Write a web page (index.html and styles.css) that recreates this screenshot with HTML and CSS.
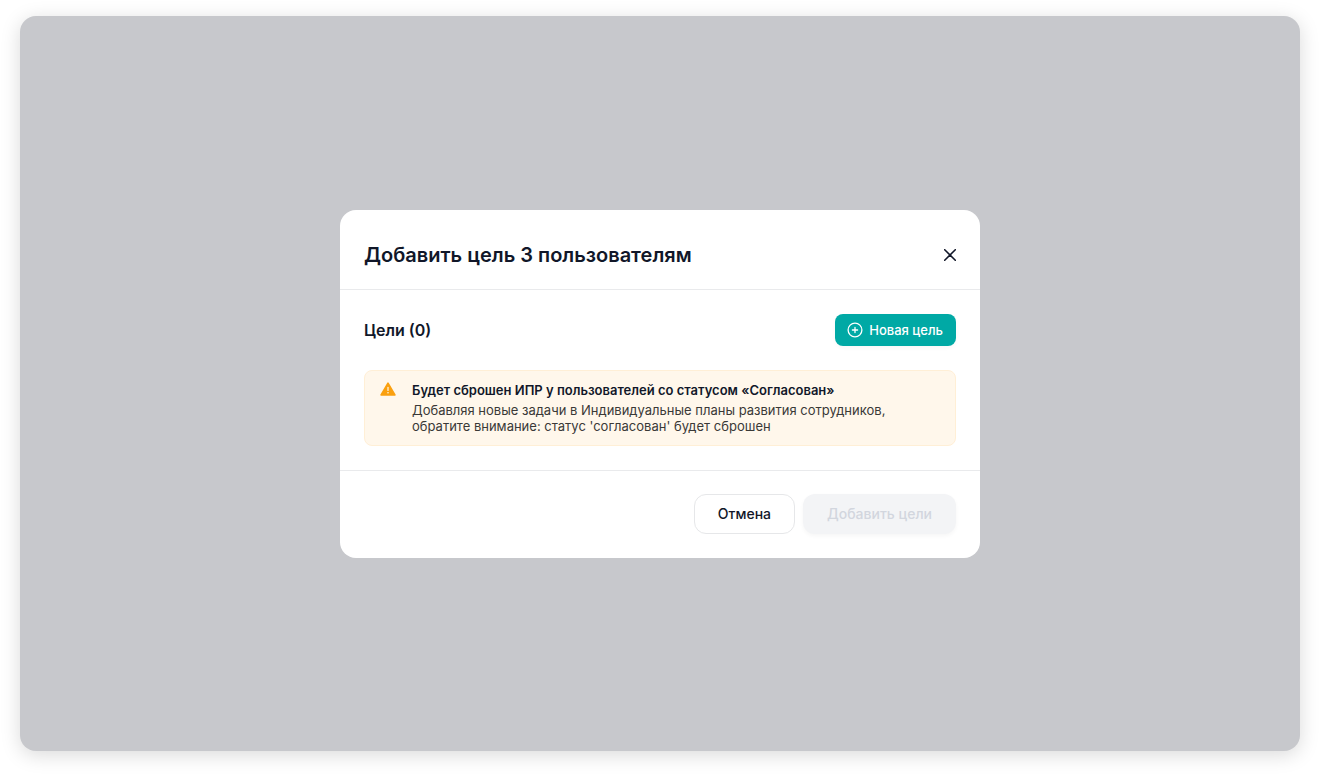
FILE: index.html
```html
<!DOCTYPE html>
<html lang="ru">
<head>
  <meta charset="UTF-8" />
  <meta name="viewport" content="width=device-width, initial-scale=1.0"/>
  <title>Добавить цель</title>
  <link rel="stylesheet" href="styles.css">
</head>
<body>

  <div class="overlay">
    <div class="modal" role="dialog" aria-labelledby="modalTitle">

      <!-- Header -->
      <div class="modal-header">
        <h2 id="modalTitle">Добавить цель 3 пользователям</h2>
        <button type="button" class="btn-close" aria-label="Закрыть">
          <svg width="12" height="12" viewBox="0 0 12 12" fill="none" stroke="currentColor" stroke-width="1.6" stroke-linecap="round">
            <path d="M0.7 0.7L11.3 11.3M11.3 0.7L0.7 11.3"/>
          </svg>
        </button>
      </div>

      <!-- Goals -->
      <div class="modal-body">
        <div class="goals-row">
          <h3>Цели (0)</h3>
          <button type="button" class="btn btn-new">
            <svg width="16" height="16" viewBox="0 0 16 16" fill="none" stroke="currentColor" stroke-width="1.3" stroke-linecap="round">
              <circle cx="8" cy="8" r="6.9"/>
              <path d="M8 5.4V10.6M5.4 8H10.6"/>
            </svg>
            Новая цель
          </button>
        </div>

        <div class="alert">
          <svg class="alert-icon" width="16" height="16" viewBox="0 0 16 16">
            <path d="M8 1.1L14.9 13H1.1Z" fill="#faa00f" stroke="#faa00f" stroke-width="1.6" stroke-linejoin="round"/>
            <path d="M8 5.4V8.4" stroke="#fff7eb" stroke-width="1.2" stroke-linecap="round"/>
            <circle cx="8" cy="10.8" r="0.8" fill="#fff7eb"/>
          </svg>
          <div class="alert-text">
            <div class="alert-title">Будет сброшен ИПР у пользователей со статусом «Согласован»</div>
            <p>Добавляя новые задачи в Индивидуальные планы развития сотрудников, обратите внимание: статус 'согласован' будет сброшен</p>
          </div>
        </div>
      </div>

      <!-- Footer -->
      <div class="modal-footer">
        <button type="button" class="btn btn-cancel">Отмена</button>
        <button type="button" class="btn btn-submit" disabled>Добавить цели</button>
      </div>

    </div>
  </div>

</body>
</html>
```
FILE: styles.css
```css
* {
  margin: 0;
  padding: 0;
  box-sizing: border-box;
}

body {
  font-family: Inter, "Liberation Sans", sans-serif;
  background-color: #fff;
  color: #111729;
  display: flex;
  min-height: 100vh;
  padding: 16px 20px 24px;
}

.overlay {
  flex: 1;
  display: flex;
  justify-content: center;
  align-items: center;
  background-color: #c7c8cc;
  border-radius: 16px;
  box-shadow: 0 4px 20px rgba(0, 0, 0, 0.15);
}

.modal {
  width: 100%;
  max-width: 640px;
  background-color: #fff;
  border-radius: 16px;
}

.modal-header {
  display: flex;
  justify-content: space-between;
  align-items: center;
  padding: 31px 24px 20px;
  border-bottom: 1px solid #e9eaec;
}

.modal-header h2 {
  font-size: 20px;
  line-height: 28px;
  font-weight: 600;
}

.btn-close {
  display: flex;
  color: #111729;
  background: none;
  border: none;
  cursor: pointer;
}

.modal-body {
  display: flex;
  flex-direction: column;
  gap: 24px;
  padding: 24px;
}

.goals-row {
  display: flex;
  justify-content: space-between;
  align-items: center;
}

.goals-row h3 {
  font-size: 16px;
  line-height: 24px;
  font-weight: 600;
}

.btn {
  font-family: inherit;
  font-weight: 500;
  border: none;
  cursor: pointer;
}

.btn-new {
  display: flex;
  align-items: center;
  gap: 6px;
  height: 32px;
  padding: 0 13px 0 12px;
  font-size: 13px;
  color: #fff;
  background-color: #00a9a5;
  border-radius: 8px;
  box-shadow: 0 2px 4px rgba(0, 0, 0, 0.03);
}

.alert {
  display: flex;
  gap: 16px;
  padding: 11px 15px;
  background-color: #fff7eb;
  border: 1px solid #ffefd6;
  border-radius: 8px;
}

.alert-icon {
  flex-shrink: 0;
}

.alert-text {
  display: flex;
  flex-direction: column;
  gap: 4px;
  font-size: 13px;
  line-height: 16px;
}

.alert-title {
  font-weight: 600;
}

.alert p {
  max-width: 500px;
  color: #3a3937;
}

.modal-footer {
  display: flex;
  justify-content: flex-end;
  gap: 8px;
  padding: 23px 24px 24px;
  border-top: 1px solid #e9eaec;
}

.btn-cancel,
.btn-submit {
  height: 40px;
  font-size: 14px;
  border-radius: 12px;
}

.btn-cancel {
  padding: 0 23px;
  color: #111729;
  background-color: #fff;
  border: 1px solid #e6e7e9;
}

.btn-submit {
  padding: 0 24px;
  color: #d2d6de;
  background-color: #f3f4f6;
  box-shadow: 0 2px 4px rgba(0, 0, 0, 0.04);
}

.btn-submit:disabled {
  cursor: default;
}
```
